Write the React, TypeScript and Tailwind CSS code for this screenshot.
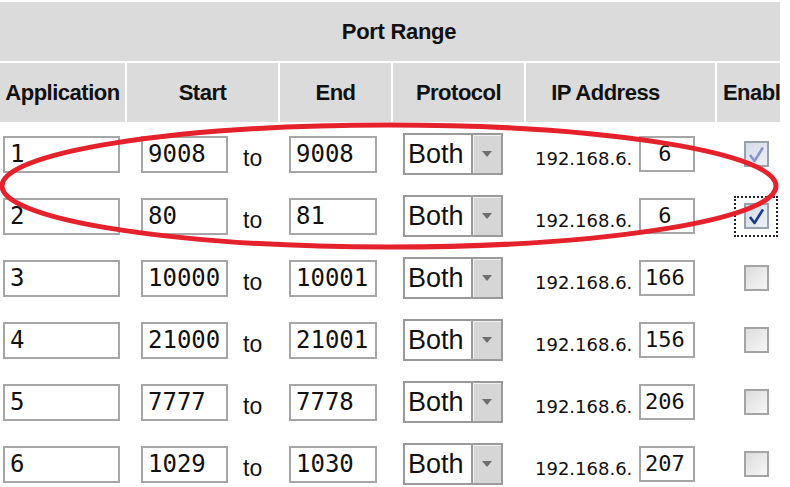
import React from 'react';

type Row = {
  app: string;
  start: string;
  end: string;
  ip: string;
  checked: boolean;
  faded?: boolean;
  focused?: boolean;
};

const rows: Row[] = [
  { app: '1', start: '9008', end: '9008', ip: ' 6', checked: true, faded: true },
  { app: '2', start: '80', end: '81', ip: ' 6', checked: true, focused: true },
  { app: '3', start: '10000', end: '10001', ip: '166', checked: false },
  { app: '4', start: '21000', end: '21001', ip: '156', checked: false },
  { app: '5', start: '7777', end: '7778', ip: '206', checked: false },
  { app: '6', start: '1029', end: '1030', ip: '207', checked: false },
];

const TextBox = ({ value, className }: { value: string; className: string }) => (
  <div
    className={`h-[37px] border-2 border-[#a6a6a6] bg-white pl-[5px] flex items-center whitespace-pre font-['DejaVu_Sans_Mono',monospace] text-[24px] leading-none text-[#111] ${className}`}
  >
    {value}
  </div>
);

const Checkbox = ({ row }: { row: Row }) => (
  <div className="relative ml-[49px] w-[25px] h-[26px]">
    <div
      className={`w-[25px] h-[26px] border-2 ${
        row.checked
          ? 'border-[#98a2ae] bg-gradient-to-br from-[#d3dbe6] to-[#eef2f7]'
          : 'border-[#a4a4a4] bg-gradient-to-br from-[#dcdcdc] to-[#f7f7f7]'
      } flex items-center justify-center`}
    >
      {row.checked && (
        <svg width="19" height="19" viewBox="0 0 19 19">
          <path
            d="M3 10 L7.5 16 L16 2.5"
            fill="none"
            stroke={row.faded ? '#8796c6' : '#1c3a86'}
            strokeWidth="2.6"
            strokeLinejoin="round"
          />
        </svg>
      )}
    </div>
    {row.focused && (
      <span className="absolute -left-[10px] -right-[9px] -top-[7px] -bottom-[8px] border-2 border-dotted border-[#222]" />
    )}
  </div>
);

const DataRow = ({ row }: { row: Row }) => (
  <div className="h-[62px] flex items-center">
    <TextBox value={row.app} className="ml-[3px] w-[117px]" />
    <TextBox value={row.start} className="ml-[21px] w-[87px]" />
    <span className="ml-[15px] w-[19px] mt-[8px] text-[23px] leading-none text-[#111] font-['Liberation_Sans',Arial,sans-serif]">
      to
    </span>
    <TextBox value={row.end} className="ml-[27px] w-[88px]" />
    <div className="ml-[26px] w-[100px] h-[42px] border-2 border-[#9a9a9a] bg-white flex">
      <span className="flex-1 flex items-center pl-[3px] text-[27px] leading-none text-[#111] font-['Liberation_Sans',Arial,sans-serif]">
        Both
      </span>
      <span className="w-[30px] border-l-2 border-[#9a9a9a] bg-[#d6d6d6] flex items-center justify-center shadow-[inset_1px_1px_0_#f2f2f2]">
        <svg width="10" height="6" viewBox="0 0 10 6">
          <path d="M0 0 H10 L5 6 Z" fill="#6e6e6e" />
        </svg>
      </span>
    </div>
    <span className="ml-[32px] w-[100px] mt-[10px] whitespace-nowrap text-[18px] leading-none text-[#111] font-['DejaVu_Sans',sans-serif]">
      192.168.6.
    </span>
    <div className="ml-[4px] w-[56px] h-[36px] border-2 border-[#a6a6a6] bg-white pl-[4px] flex items-center whitespace-pre font-['DejaVu_Sans_Mono',monospace] text-[22px] leading-none text-[#111]">
      {row.ip}
    </div>
    <Checkbox row={row} />
  </div>
);

export default function App() {
  return (
    <div className="relative w-[790px] h-[487px] overflow-hidden bg-white font-['Liberation_Sans',Arial,sans-serif]">
      <div className="w-[780px] overflow-hidden">
        <div className="w-[798px] pt-[2px] flex flex-col gap-[2px]">
          <div className="h-[59px] bg-[#dbdbdb] flex items-center justify-center text-[22px] font-bold text-[#111] tracking-[-0.3px]">
            Port Range
          </div>
          <div className="h-[59px] flex gap-[2px] text-[22px] font-bold text-[#111] tracking-[-0.5px]">
            <div className="w-[125px] bg-[#dbdbdb] flex items-center justify-center">Application</div>
            <div className="w-[151px] bg-[#dbdbdb] flex items-center justify-center">Start</div>
            <div className="w-[111px] bg-[#dbdbdb] flex items-center justify-center">End</div>
            <div className="w-[131px] bg-[#dbdbdb] flex items-center justify-center">Protocol</div>
            <div className="w-[189px] bg-[#dbdbdb] flex items-center justify-center pr-[30px]">IP Address</div>
            <div className="flex-1 bg-[#dbdbdb] flex items-center justify-center">Enable</div>
          </div>
        </div>
        <div className="pt-[1px]">
          {rows.map((r) => (
            <DataRow key={r.app} row={r} />
          ))}
        </div>
      </div>
      <svg className="absolute inset-0 pointer-events-none" width="790" height="487" viewBox="0 0 790 487">
        <ellipse cx="389" cy="186" rx="387" ry="61" fill="none" stroke="#e5212b" strokeWidth="5" />
      </svg>
    </div>
  );
}
